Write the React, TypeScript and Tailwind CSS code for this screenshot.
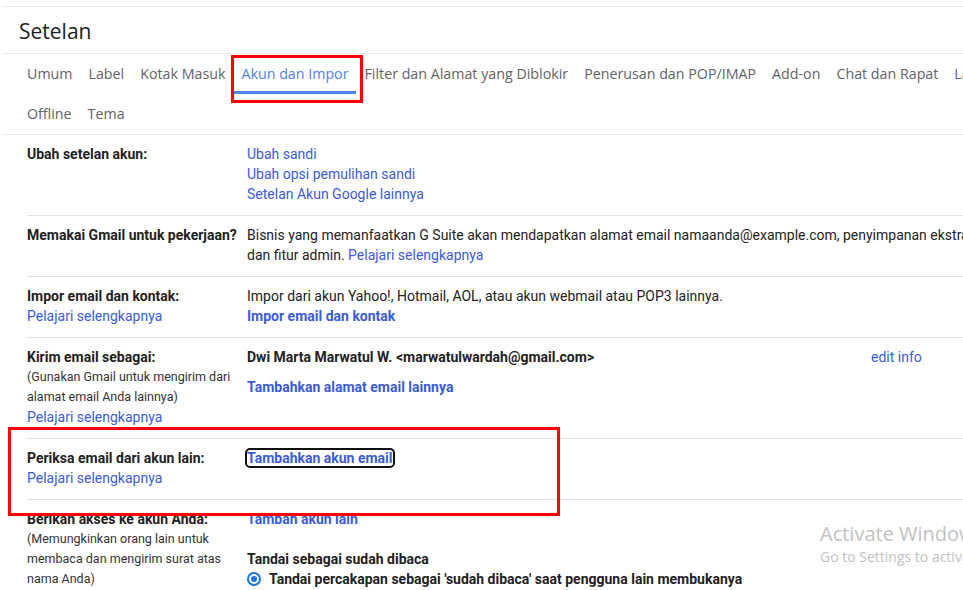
import React from 'react';

const tabsTop = ['Umum', 'Label', 'Kotak Masuk', 'Akun dan Impor', 'Filter dan Alamat yang Diblokir', 'Penerusan dan POP/IMAP', 'Add-on', 'Chat dan Rapat', 'Lanjutan'];
const tabsBottom = ['Offline', 'Tema'];

const link = 'text-[#3b5bd6] cursor-pointer';

const Tab: React.FC<{ label: string; active?: boolean }> = ({ label, active }) => (
  <div className="relative h-[40px] px-[8px] flex items-center whitespace-nowrap">
    <span className={active ? 'text-[#4f7fe8]' : 'text-[#5f6368]'}>{label}</span>
    {active && <div className="absolute left-[1px] right-[1px] bottom-0 h-[3px] bg-[#4a86ee]" />}
  </div>
);

const Row: React.FC<{ label: React.ReactNode; children: React.ReactNode; className?: string }> = ({ label, children, className = '' }) => (
  <div className={`flex border-b border-[#e3e3e3] pt-[9px] pb-[11px] ${className}`}>
    <div className="w-[220px] shrink-0">{label}</div>
    <div className="flex-1">{children}</div>
  </div>
);

export default function App() {
  return (
    <div className="relative w-[963px] h-[590px] overflow-hidden bg-white font-['Roboto',sans-serif] text-[14px] leading-[20px] text-[#222]">
      <div className="w-[1200px] pt-[6px] pl-[3px]">
        <div className="border-t border-[#e8e8e8]">
          <div className="h-[46px] flex items-center pl-[16px] pt-[2px] font-['Open_Sans',sans-serif] text-[21px] text-[#202124]">
            Setelan
          </div>
          <div className="border-t border-[#e8e8e8] border-b pl-[16px] font-['Open_Sans',sans-serif] text-[14.25px] font-medium">
            <div className="flex">
              {tabsTop.map((t) => (
                <Tab key={t} label={t} active={t === 'Akun dan Impor'} />
              ))}
            </div>
            <div className="flex">
              {tabsBottom.map((t) => (
                <Tab key={t} label={t} />
              ))}
            </div>
          </div>
        </div>

        <div className="ml-[24px]">
          <Row label={<b>Ubah setelan akun:</b>}>
            <div className={link}>Ubah sandi</div>
            <div className={link}>Ubah opsi pemulihan sandi</div>
            <div className={link}>Setelan Akun Google lainnya</div>
          </Row>

          <Row className="pt-[8px]" label={<b>Memakai Gmail untuk pekerjaan?</b>}>
            <div>
              Bisnis yang memanfaatkan G Suite akan mendapatkan alamat email namaanda@example.com, penyimpanan ekstra,
              <br />
              dan fitur admin. <span className={link}>Pelajari selengkapnya</span>
            </div>
          </Row>

          <Row
            label={
              <>
                <b className="block">Impor email dan kontak:</b>
                <div className={link}>Pelajari selengkapnya</div>
              </>
            }
          >
            <div>Impor dari akun Yahoo!, Hotmail, AOL, atau akun webmail atau POP3 lainnya.</div>
            <div className={`${link} font-bold`}>Impor email dan kontak</div>
          </Row>

          <Row
            label={
              <>
                <b className="block">Kirim email sebagai:</b>
                <div className="text-[12.5px] leading-[20px] text-[#333]">
                  (Gunakan Gmail untuk mengirim dari
                  <br />
                  alamat email Anda lainnya)
                </div>
                <div className={link}>Pelajari selengkapnya</div>
              </>
            }
          >
            <div className="flex">
              <b className="w-[624px]">Dwi Marta Marwatul W. &lt;marwatulwardah@gmail.com&gt;</b>
              <span className={link}>edit info</span>
            </div>
            <div className={`${link} font-bold mt-[10px]`}>Tambahkan alamat email lainnya</div>
          </Row>

          <Row
            label={
              <>
                <b className="block">Periksa email dari akun lain:</b>
                <div className={link}>Pelajari selengkapnya</div>
              </>
            }
          >
            <span className={`${link} font-bold outline-2 outline-[#111] rounded-[3px] outline-offset-[0px]`}>
              Tambahkan akun email
            </span>
          </Row>

          <Row
            label={
              <>
                <b className="block">Berikan akses ke akun Anda:</b>
                <div className="text-[12.5px] leading-[20px] text-[#333]">
                  (Memungkinkan orang lain untuk
                  <br />
                  membaca dan mengirim surat atas
                  <br />
                  nama Anda)
                </div>
              </>
            }
          >
            <div className={`${link} font-bold`}>Tambah akun lain</div>
            <div className="mt-[20px] font-bold">Tandai sebagai sudah dibaca</div>
            <div className="flex items-center gap-[8px] font-bold">
              <span className="w-[14px] h-[14px] rounded-full border-2 border-[#1a73e8] flex items-center justify-center">
                <span className="w-[6px] h-[6px] rounded-full bg-[#1a73e8]" />
              </span>
              <span>Tandai percakapan sebagai 'sudah dibaca' saat pengguna lain membukanya</span>
            </div>
          </Row>
        </div>
      </div>

      {/* annotation boxes */}
      <div className="absolute left-[231px] top-[55px] w-[132px] h-[48px] border-[3px] border-[#ff0000]" />
      <div className="absolute left-[8px] top-[427px] w-[552px] h-[89px] border-[3px] border-[#ff0000]" />

      {/* windows watermark */}
      <div className="absolute left-[820px] top-[521px] font-['Open_Sans',sans-serif] text-[#c2c2c2] whitespace-nowrap">
        <div className="text-[20px] leading-[26px]">Activate Windows</div>
        <div className="text-[14px] leading-[20px]">Go to Settings to activate Windows.</div>
      </div>
    </div>
  );
}
